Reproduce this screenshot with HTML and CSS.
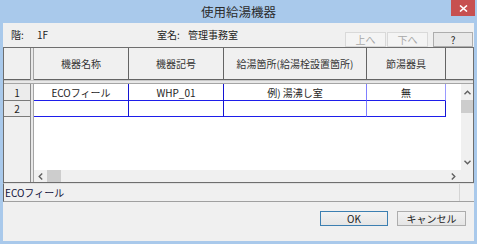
FILE: index.html
```html
<!DOCTYPE html>
<html lang="ja">
<head>
    <meta charset="UTF-8">
    <title>使用給湯機器</title>
    <link rel="stylesheet" href="styles.css">
</head>
<body>
    <div class="window">
        <div class="titlebar">
            <span class="title">使用給湯機器</span>
            <button class="close" aria-label="閉じる">
                <svg width="9" height="7" viewBox="0 0 9 7"><path d="M1 0.5 L8 6.5 M8 0.5 L1 6.5" stroke="#fff" stroke-width="1.6" fill="none"/></svg>
            </button>
        </div>

        <div class="client">
            <!-- Floor / room row -->
            <div class="toolbar">
                <span class="lbl-floor">階:</span>
                <span class="val-floor">1F</span>
                <span class="lbl-room">室名:</span>
                <span>管理事務室</span>
                <div class="nav">
                    <button class="nav-btn" disabled>上へ</button>
                    <button class="nav-btn down" disabled>下へ</button>
                    <button class="nav-btn help">?</button>
                </div>
            </div>

            <!-- Sheet -->
            <div class="sheet">
                <div class="corner"></div>
                <div class="vsplit"></div>
                <div class="head-row">
                    <div class="hcell">機器名称</div>
                    <div class="hcell">機器記号</div>
                    <div class="hcell">給湯箇所(給湯栓設置箇所)</div>
                    <div class="hcell">節湯器具</div>
                    <div class="hcell rest"></div>
                </div>
                <div class="hsplit"></div>
                <div class="row-heads">
                    <div class="rh r1">1</div>
                    <div class="rh r2">2</div>
                </div>
                <div class="vsplit"></div>
                <div class="body">
                    <div class="data">
                        <div class="row r1">
                            <div>ECOフィール</div>
                            <div>WHP_01</div>
                            <div class="c3">例) 湯沸し室</div>
                            <div class="c4">無</div>
                        </div>
                        <div class="row r2">
                            <div></div>
                            <div></div>
                            <div class="c3"></div>
                            <div class="c4"></div>
                        </div>
                    </div>
                    <div class="vscroll">
                        <span class="arrow"><svg width="7" height="5" viewBox="0 0 7 5"><path d="M0.5 4.2 L3.5 1.2 L6.5 4.2" stroke="#606060" stroke-width="1.4" fill="none"/></svg></span>
                        <span class="thumb"></span>
                        <span></span>
                        <span class="arrow"><svg width="7" height="5" viewBox="0 0 7 5"><path d="M0.5 0.8 L3.5 3.8 L6.5 0.8" stroke="#606060" stroke-width="1.4" fill="none"/></svg></span>
                    </div>
                    <div class="hscroll">
                        <span class="arrow"><svg width="5" height="7" viewBox="0 0 5 7"><path d="M4.2 0.5 L1.2 3.5 L4.2 6.5" stroke="#606060" stroke-width="1.4" fill="none"/></svg></span>
                        <span class="thumb"></span>
                        <span></span>
                        <span class="arrow"><svg width="5" height="7" viewBox="0 0 5 7"><path d="M0.8 0.5 L3.8 3.5 L0.8 6.5" stroke="#606060" stroke-width="1.4" fill="none"/></svg></span>
                    </div>
                    <div class="scroll-corner"></div>
                </div>
            </div>

            <div class="status">
                <span class="status-text">ECOフィール</span>
                <span class="status-end"></span>
            </div>

            <div class="actions">
                <button class="btn ok">OK</button>
                <button class="btn cancel">キャンセル</button>
            </div>
        </div>
    </div>
</body>
</html>
```

FILE: styles.css
```css
* {
    margin: 0;
    padding: 0;
    box-sizing: border-box;
}

body {
    background: #ffffff;
    font-family: "Noto Sans CJK JP", "Noto Sans", sans-serif;
    font-size: 10px;
    color: #1e1e1e;
}

button {
    font: inherit;
}

/* Window frame */
.window {
    width: 477px;
    height: 244px;
    background: #a9c9eb;
    padding: 0 3px 3px 3px;
    display: flex;
    flex-direction: column;
}

.titlebar {
    height: 23px;
    display: grid;
    grid-template-columns: 1fr auto 1fr;
    align-items: start;
}

.title {
    grid-column: 2;
    font-size: 12.5px;
    line-height: 23px;
    color: #2b2b2b;
}

.close {
    grid-column: 3;
    justify-self: end;
    width: 24px;
    height: 16px;
    margin-right: -1px;
    background: #c75050;
    border: none;
    display: flex;
    align-items: center;
    justify-content: center;
}

.client {
    flex: 1;
    background: #f0f0f0;
    display: flex;
    flex-direction: column;
}

/* Top row */
.toolbar {
    height: 24px;
    display: flex;
    align-items: center;
    padding: 0 1px 0 8px;
    line-height: 12px;
}

.lbl-floor { width: 26px; }
.val-floor { width: 120px; }
.lbl-room { width: 31px; }

.nav {
    margin-left: auto;
    align-self: flex-end;
    display: flex;
}

.nav-btn {
    width: 41px;
    height: 15px;
    background: #f4f4f4;
    border: 1px solid #d9d9d9;
    color: #a8a8a8;
    line-height: 12px;
}

.nav-btn.down {
    margin-left: 1px;
}

.nav-btn.help {
    width: 40px;
    margin-left: 5px;
    background: #e9e9e9;
    border-color: #adadad;
    color: #222;
}

/* Sheet */
.sheet {
    height: 136px;
    border: 1px solid #6e6e6e;
    background: #ffffff;
    display: grid;
    grid-template-columns: 26px 4px 1fr;
    grid-template-rows: 32px 4px 1fr;
}

.corner {
    background: #f0f0f0;
    border-bottom: 1px solid #646464;
}

.vsplit {
    background: #e8e8e8;
    border-left: 1px solid #8c8c8c;
    border-right: 1px solid #a5a5a5;
}

.hsplit {
    grid-column: 1 / -1;
    background: #e8e8e8;
    border-top: 1px solid #c8c8c8;
    border-bottom: 1px solid #a5a5a5;
}

.head-row {
    display: grid;
    grid-template-columns: 95px 95px 143px 79px 1fr;
    background: #f0f0f0;
    border-bottom: 1px solid #646464;
}

.hcell {
    border-right: 1px solid #646464;
    display: flex;
    align-items: center;
    justify-content: center;
    color: #333;
}

.hcell.rest {
    border-right: none;
}

.row-heads {
    background: #f0f0f0;
    display: flex;
    flex-direction: column;
}

.rh {
    display: flex;
    align-items: center;
    justify-content: center;
    border-bottom: 1px solid #7a7a7a;
    background: #ececec;
}

.r1 { height: 17px; }
.r2 { height: 16px; }

.body {
    display: grid;
    grid-template-columns: 1fr 12px;
    grid-template-rows: 1fr 12px;
}

.data {
    background: #ffffff;
}

.row {
    display: grid;
    grid-template-columns: 95px 95px 143px 79px;
}

.row > div {
    border-right: 1px solid #1414d2;
    border-bottom: 1px solid #1e1eea;
    display: flex;
    align-items: center;
    justify-content: center;
}

.row > .c3 {
    border-right-color: #7f7fff;
}

.row.r1 > .c4 {
    border-right-color: #9a9aff;
}

.vscroll {
    background: #f0f0f0;
    display: grid;
    grid-template-rows: 16px 13px 1fr 16px;
}

.hscroll {
    background: #f0f0f0;
    display: grid;
    grid-template-columns: 13px 14px 1fr 16px;
}

.arrow {
    display: flex;
    align-items: center;
    justify-content: center;
}

.thumb {
    background: #cdcdcd;
}

.scroll-corner {
    background: #f0f0f0;
}

/* Status line */
.status {
    height: 19px;
    display: flex;
    align-items: center;
    border-top: 1px solid #e0e0e0;
    border-left: 1px solid #646464;
    border-bottom: 1px solid #a0a0a0;
}

.status-text {
    padding-left: 1px;
    color: #10103a;
}

.status-end {
    margin-left: auto;
    width: 15px;
    height: 100%;
    border-left: 1px solid #d4d4d4;
}

/* Dialog buttons */
.actions {
    flex: 1;
    display: flex;
    justify-content: flex-end;
    align-items: flex-start;
    gap: 9px;
    padding: 9px 8px 0 0;
}

.btn {
    width: 68px;
    height: 15px;
    border: 1px solid #adadad;
    background: linear-gradient(#f2f2f2, #e5e5e5);
    color: #222;
    line-height: 12px;
}

.btn.ok {
    border-color: #3c7fb1;
}

.btn.cancel {
    width: 69px;
}
```
